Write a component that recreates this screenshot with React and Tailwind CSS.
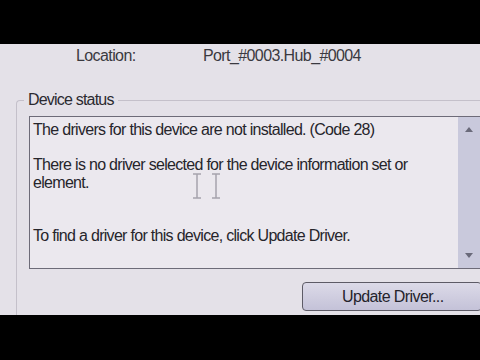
const font = { fontFamily: '"Liberation Sans", Arial, sans-serif' };

const IBeam = () => (
  <svg width="12" height="26" viewBox="0 0 12 26" className="text-[#8a8793]">
    <path d="M2 1h8M6 1v24M2 25h8" stroke="currentColor" strokeWidth="1.5" fill="none" />
  </svg>
);

export default function App() {
  return (
    <div className="w-[480px] h-[360px] bg-black flex flex-col overflow-hidden" style={font}>
      <div className="h-[44px] shrink-0" />
      <div className="h-[271px] shrink-0 bg-[#e4e1e8] flex flex-col text-[#2b2a30]">
        <div className="flex h-[22px] items-center mt-[1px] text-[16px] tracking-[-0.6px] text-[#3a3940]">
          <span className="ml-[76px] w-[127px]">Location:</span>
          <span>Port_#0003.Hub_#0004</span>
        </div>
        <div className="mt-[33px] ml-[16px] flex-1 border-l border-t border-[#c4c0ca] rounded-tl-[4px] relative">
          <span className="absolute -top-[12px] left-[7px] px-[4px] bg-[#e4e1e8] text-[16px] tracking-[-0.8px] leading-[22px]">
            Device status
          </span>
          <div className="mt-[15px] ml-[12px] h-[153px] border border-[#6d6b78] border-r-0 bg-[#ebe8ee] flex">
            <div className="flex-1 pl-[3px] pt-[4px] text-[16px] leading-[18px] tracking-[-0.7px] text-[#26252b] relative">
              <p>The drivers for this device are not installed. (Code 28)</p>
              <p className="mt-[17px]">There is no driver selected for the device information set or</p>
              <p>element.</p>
              <p className="mt-[35px]">To find a driver for this device, click Update Driver.</p>
              <div className="absolute left-[161px] top-[56px] flex gap-[7px] opacity-70">
                <IBeam />
                <IBeam />
              </div>
            </div>
            <div className="w-[22px] bg-[#c9c9dc] flex flex-col items-center justify-between py-[10px] text-[#6a6a7a]">
              <svg width="8" height="5" viewBox="0 0 8 5"><path d="M0 5L4 0L8 5Z" fill="currentColor" /></svg>
              <svg width="8" height="5" viewBox="0 0 8 5"><path d="M0 0L4 5L8 0Z" fill="currentColor" /></svg>
            </div>
          </div>
          <div className="flex justify-end mt-[13px]">
            <div className="w-[180px] h-[29px] -mr-[2px] border border-[#5d5b66] rounded-[4px] bg-gradient-to-b from-[#dcdae8] to-[#c4c2d8] flex items-center pl-[39px] text-[16px] tracking-[-0.6px] text-[#24232c]">
              Update Driver...
            </div>
          </div>
        </div>
      </div>
    </div>
  );
}
